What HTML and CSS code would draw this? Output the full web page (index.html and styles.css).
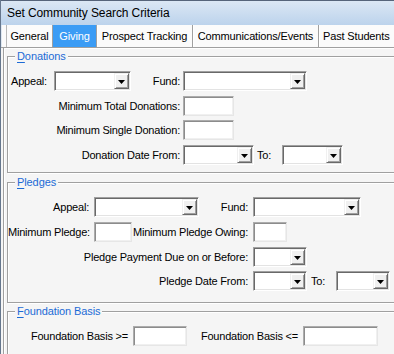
FILE: index.html
```html
<!DOCTYPE html>
<html>
<head>
<meta charset="utf-8">
<link rel="stylesheet" href="styles.css">
</head>
<body>
<div class="window">
  <div class="titlebar">Set Community Search Criteria</div>
  <div class="tabstrip">
    <div class="tab t-general">General</div>
    <div class="tab t-giving active">Giving</div>
    <div class="tab t-prospect">Prospect Tracking</div>
    <div class="tab t-comm">Communications/Events</div>
    <div class="tab t-past">Past Students</div>
  </div>
  <div class="page">
    <fieldset class="group g-donations">
      <legend><u>D</u>onations</legend>
      <div class="row r-first">
        <span class="lbl lbl-left w46">Appeal:</span>
        <div class="combo w77"><span class="cval"></span><span class="btn"><svg width="7" height="4" viewBox="0 0 7 4"><polygon points="0,0 7,0 3.5,4" fill="#000"/></svg></span></div>
        <span class="lbl pr3 w52">Fund:</span>
        <div class="combo w124"><span class="cval"></span><span class="btn"><svg width="7" height="4" viewBox="0 0 7 4"><polygon points="0,0 7,0 3.5,4" fill="#000"/></svg></span></div>
      </div>
      <div class="row mt5">
        <span class="lbl pr3 w175">Minimum Total Donations:</span>
        <div class="input w51"></div>
      </div>
      <div class="row mt4">
        <span class="lbl pr3 w175">Minimum Single Donation:</span>
        <div class="input w51"></div>
      </div>
      <div class="row mt5">
        <span class="lbl pr3 w175">Donation Date From:</span>
        <div class="combo w71"><span class="cval"></span><span class="btn"><svg width="7" height="4" viewBox="0 0 7 4"><polygon points="0,0 7,0 3.5,4" fill="#000"/></svg></span></div>
        <span class="lbl lbl-left w28">To:</span>
        <div class="combo w61"><span class="cval"></span><span class="btn"><svg width="7" height="4" viewBox="0 0 7 4"><polygon points="0,0 7,0 3.5,4" fill="#000"/></svg></span></div>
      </div>
    </fieldset>

    <fieldset class="group g-pledges">
      <legend><u>P</u>ledges</legend>
      <div class="row r-first">
        <span class="lbl w86">Appeal:</span>
        <div class="combo w105"><span class="cval"></span><span class="btn"><svg width="7" height="4" viewBox="0 0 7 4"><polygon points="0,0 7,0 3.5,4" fill="#000"/></svg></span></div>
        <span class="lbl w54">Fund:</span>
        <div class="combo w108"><span class="cval"></span><span class="btn"><svg width="7" height="4" viewBox="0 0 7 4"><polygon points="0,0 7,0 3.5,4" fill="#000"/></svg></span></div>
      </div>
      <div class="row mt5">
        <span class="lbl w86">Minimum Pledge:</span>
        <div class="input w38"></div>
        <span class="lbl w121">Minimum Pledge Owing:</span>
        <div class="input w34"></div>
      </div>
      <div class="row mt5">
        <span class="lbl w245">Pledge Payment Due on or Before:</span>
        <div class="combo w54"><span class="cval"></span><span class="btn"><svg width="7" height="4" viewBox="0 0 7 4"><polygon points="0,0 7,0 3.5,4" fill="#000"/></svg></span></div>
      </div>
      <div class="row mt4">
        <span class="lbl w245">Pledge Date From:</span>
        <div class="combo w54"><span class="cval"></span><span class="btn"><svg width="7" height="4" viewBox="0 0 7 4"><polygon points="0,0 7,0 3.5,4" fill="#000"/></svg></span></div>
        <span class="lbl lbl-left pl4 w29">To:</span>
        <div class="combo w54"><span class="cval"></span><span class="btn"><svg width="7" height="4" viewBox="0 0 7 4"><polygon points="0,0 7,0 3.5,4" fill="#000"/></svg></span></div>
      </div>
    </fieldset>

    <fieldset class="group g-foundation">
      <legend><u>F</u>oundation Basis</legend>
      <div class="row r-first">
        <span class="lbl w125">Foundation Basis &gt;=</span>
        <div class="input w54"></div>
        <span class="lbl w116">Foundation Basis &lt;=</span>
        <div class="input w75"></div>
      </div>
    </fieldset>
  </div>
</div>
</body>
</html>
```

FILE: styles.css
```css
html, body {
  margin: 0;
  padding: 0;
}
body {
  width: 394px;
  height: 354px;
  overflow: hidden;
  background: #f5f5f5;
  font-family: "Liberation Sans", Arial, sans-serif;
  font-size: 11px;
  color: #000;
}
.window {
  width: 393px;
  height: 354px;
  overflow: hidden;
  border-left: 1px solid #66778d;
  background: #f5f5f5;
}
.titlebar {
  height: 24px;
  border-top: 1px solid #56647a;
  background: linear-gradient(#dbe7f4, #bcd3ec);
  font-size: 12px;
  line-height: 24px;
  padding-left: 6px;
  letter-spacing: -0.1px;
}
.tabstrip {
  height: 22px;
  display: flex;
  padding-left: 5px;
  background: #fbfbfb;
  border-bottom: 1px solid #a0a0a0;
  box-shadow: inset 1px 0 #dfe8f2;
  overflow: hidden;
}
.tab {
  flex: none;
  box-sizing: border-box;
  height: 22px;
  line-height: 22px;
  text-align: center;
  border-right: 1px solid #a0a0a0;
  box-shadow: 1px 0 #fff;
  letter-spacing: -0.15px;
}
.t-general { width: 47px; border-left: 1px solid #b8b8b8; }
.t-giving { width: 44px; }
.t-prospect { width: 96px; }
.t-comm { width: 126px; }
.t-past { width: 74px; border-right: none; box-shadow: none; text-align: left; padding-left: 4px; }
.tab.active {
  background: #3b9cf5;
  color: #fff;
}
.page {
  margin-left: 2px;
  border-left: 1px solid #a0a0a0;
  box-shadow: inset 1px 1px #fff;
  padding-left: 3px;
  padding-top: 2px;
  height: 320px;
  overflow: hidden;
}
.group {
  margin: 0;
  padding: 0;
  width: 400px;
  box-sizing: border-box;
  min-inline-size: 0;
  border: 1px solid #a0a0a0;
  box-shadow: inset 1px 1px 0 #fff, 1px 1px 0 #fff;
}
.group legend {
  margin-left: 7px;
  padding: 0 2px;
  font-size: 11px;
  line-height: 13px;
  color: #1c6bd6;
  background: #f5f5f5;
  letter-spacing: -0.1px;
}
.group legend u {
  text-decoration-thickness: 1px;
  text-underline-offset: 2px;
}
.g-donations { margin-top: 0; padding-bottom: 7px; }
.g-pledges { margin-top: 3px; padding-bottom: 11px; }
.g-foundation { margin-top: 2px; padding-bottom: 10px; }
.g-donations .r-first { margin-top: 8px; }
.g-pledges .r-first { margin-top: 8px; }
.g-foundation .r-first { margin-top: 8px; }

.row {
  display: flex;
  align-items: center;
  height: 20px;
}
.mt4 { margin-top: 4px; }
.mt5 { margin-top: 5px; }

.lbl {
  flex: none;
  box-sizing: border-box;
  text-align: right;
  padding-right: 5px;
  line-height: 20px;
  white-space: nowrap;
  letter-spacing: -0.2px;
}
.lbl.pr3 { padding-right: 3px; }
.lbl-left { text-align: left; padding-right: 0; padding-left: 3px; }
.lbl-left.pl4 { padding-left: 4px; }

.combo, .input {
  flex: none;
  box-sizing: border-box;
  height: 20px;
  background: #fff;
  border-style: solid;
  border-width: 1px;
  border-color: #a0a0a0 #fff #fff #a0a0a0;
  box-shadow: inset 1px 1px 0 #696969, inset -1px -1px 0 #e3e3e3;
}
.input {
  border-color: #acacac #e6e6e6 #e6e6e6 #acacac;
  box-shadow: inset 1px 1px 0 #8c8c8c, inset -1px -1px 0 #f0f0f0;
}
.combo {
  display: flex;
  padding: 1px;
}
.cval { flex: 1; }
.btn {
  flex: none;
  width: 15px;
  height: 16px;
  box-sizing: border-box;
  background: #f0f0f0;
  border-style: solid;
  border-width: 1px;
  border-color: #f0f0f0 #696969 #696969 #f0f0f0;
  box-shadow: inset 1px 1px 0 #fff, inset -1px -1px 0 #a0a0a0;
  display: flex;
  align-items: center;
  justify-content: center;
  padding-top: 1px;
}
.btn svg { display: block; }

.w28 { width: 28px; }
.w29 { width: 29px; }
.w34 { width: 34px; }
.w38 { width: 38px; }
.w46 { width: 46px; }
.w51 { width: 51px; }
.w52 { width: 52px; }
.w54 { width: 54px; }
.w61 { width: 61px; }
.w71 { width: 71px; }
.w75 { width: 75px; }
.w77 { width: 77px; }
.w86 { width: 86px; }
.w105 { width: 105px; }
.w108 { width: 108px; }
.w116 { width: 116px; }
.w121 { width: 121px; }
.w124 { width: 124px; }
.w125 { width: 125px; }
.w175 { width: 175px; }
.w245 { width: 245px; }
```
